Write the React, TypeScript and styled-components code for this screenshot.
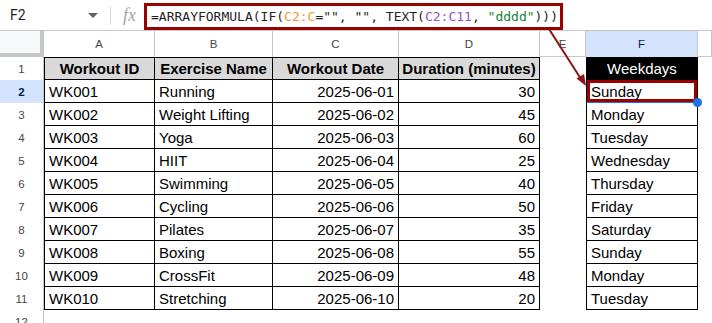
import React, { FC } from 'react';
import styled, { createGlobalStyle } from 'styled-components';

const GlobalStyle = createGlobalStyle`
  html, body {
    margin: 0;
    padding: 0;
    background: #fff;
  }
  body {
    font-family: 'Liberation Sans', Arial, sans-serif;
    overflow: hidden;
  }
`;

const Page = styled.div`
  position: relative;
  width: 712px;
  height: 323px;
  overflow: hidden;
  display: flex;
  flex-direction: column;
`;

const FormulaBar = styled.div`
  display: flex;
  align-items: center;
  height: 30px;
  flex-shrink: 0;
`;
const NameBox = styled.div`
  width: 110px;
  box-sizing: border-box;
  display: flex;
  align-items: center;
  justify-content: space-between;
  padding: 0 12px 0 10px;
  font-family: Roboto, 'Liberation Sans', sans-serif;
  font-size: 14px;
  color: #1f1f1f;
`;
const Caret = styled.span`
  width: 0;
  height: 0;
  border-left: 5px solid transparent;
  border-right: 5px solid transparent;
  border-top: 5px solid #5f6368;
`;
const Divider = styled.div`
  width: 1px;
  height: 19px;
  background: #dadce0;
`;
const Fx = styled.div`
  width: 33px;
  box-sizing: border-box;
  padding-left: 12px;
  font-family: 'Liberation Serif', serif;
  font-style: italic;
  font-size: 18px;
  color: #a4a4a4;
`;
const FormulaBox = styled.div`
  align-self: flex-end;
  width: 419px;
  height: 27px;
  box-sizing: border-box;
  border: 3px solid #990000;
  display: flex;
  align-items: center;
  padding-left: 4px;
  font-family: 'DejaVu Sans Mono', 'Liberation Mono', monospace;
  font-size: 13px;
  color: #1f1f1f;
  white-space: pre;
`;
const Token = styled.span<{ $color: string }>`
  color: ${(p) => p.$color};
`;

const Grid = styled.div`
  display: grid;
  grid-template-columns: 44px 111px 118px 126px 141px 46px 112px 1fr;
  grid-template-rows: 26px repeat(12, 23px);
  border-top: 1px solid #c7c7c7;
`;
const Corner = styled.div`
  background: #f8f9fa;
  border-right: 4px solid #c4c7c5;
  border-bottom: 4px solid #c4c7c5;
  box-sizing: border-box;
`;
const ColHead = styled.div<{ $selected?: boolean; $underline?: boolean }>`
  display: flex;
  align-items: center;
  justify-content: center;
  box-sizing: border-box;
  border-right: 1px solid #c7c7c7;
  border-bottom: ${(p) => (p.$underline ? '1px solid #c7c7c7' : 'none')};
  background: ${(p) => (p.$selected ? '#d3e3fd' : '#fff')};
  color: ${(p) => (p.$selected ? '#041e49' : '#444746')};
  font-size: 11.5px;
`;
const RowHead = styled.div<{ $selected?: boolean }>`
  display: flex;
  align-items: center;
  justify-content: center;
  box-sizing: border-box;
  border-right: 1px solid #c7c7c7;
  background: ${(p) => (p.$selected ? '#d3e3fd' : '#fff')};
  color: ${(p) => (p.$selected ? '#041e49' : '#444746')};
  font-weight: ${(p) => (p.$selected ? 700 : 400)};
  font-size: 11.5px;
`;
const Cell = styled.div<{
  $align?: 'left' | 'center' | 'right';
  $head?: boolean;
  $dark?: boolean;
  $top?: boolean;
  $left?: boolean;
  $active?: boolean;
}>`
  position: relative;
  display: flex;
  align-items: center;
  justify-content: ${(p) =>
    p.$align === 'right' ? 'flex-end' : p.$align === 'center' ? 'center' : 'flex-start'};
  box-sizing: border-box;
  padding: 0 4px;
  border-right: 1px solid #000;
  border-bottom: 1px solid ${(p) => (p.$active ? '#1a73e8' : '#000')};
  border-top: ${(p) => (p.$top ? '1px solid #000' : 'none')};
  border-left: ${(p) => (p.$left ? '1px solid #000' : 'none')};
  background: ${(p) => (p.$dark ? '#000' : p.$head ? '#d9d9d9' : '#fff')};
  color: ${(p) => (p.$dark ? '#fff' : '#000')};
  font-size: 15px;
  font-weight: ${(p) => (p.$head ? 700 : 400)};
  white-space: nowrap;
  box-shadow: ${(p) => (p.$active ? 'inset 0 0 0 3px #990000, 0 1px 0 #1a73e8' : 'none')};

  &::after {
    content: '';
    display: ${(p) => (p.$active ? 'block' : 'none')};
    position: absolute;
    right: -5px;
    bottom: -5px;
    width: 9px;
    height: 9px;
    border-radius: 50%;
    background: #1a73e8;
    z-index: 2;
  }
`;
const Blank = styled.div``;

const Arrow = styled.svg`
  position: absolute;
  left: 0;
  top: 0;
  pointer-events: none;
  z-index: 3;
`;

const rows: [string, string, string, number, string][] = [
  ['WK001', 'Running', '2025-06-01', 30, 'Sunday'],
  ['WK002', 'Weight Lifting', '2025-06-02', 45, 'Monday'],
  ['WK003', 'Yoga', '2025-06-03', 60, 'Tuesday'],
  ['WK004', 'HIIT', '2025-06-04', 25, 'Wednesday'],
  ['WK005', 'Swimming', '2025-06-05', 40, 'Thursday'],
  ['WK006', 'Cycling', '2025-06-06', 50, 'Friday'],
  ['WK007', 'Pilates', '2025-06-07', 35, 'Saturday'],
  ['WK008', 'Boxing', '2025-06-08', 55, 'Sunday'],
  ['WK009', 'CrossFit', '2025-06-09', 48, 'Monday'],
  ['WK010', 'Stretching', '2025-06-10', 20, 'Tuesday'],
];

const headers = ['Workout ID', 'Exercise Name', 'Workout Date', 'Duration (minutes)'];
const letters = ['A', 'B', 'C', 'D', 'E', 'F', ''];

const App: FC = () => {
  return (
    <>
      <GlobalStyle />
      <Page>
        <FormulaBar>
          <NameBox>
            F2
            <Caret />
          </NameBox>
          <Divider />
          <Fx>fx</Fx>
          <FormulaBox>
            =ARRAYFORMULA(IF(<Token $color="#ec9a2c">C2:C</Token>="", "", TEXT(
            <Token $color="#9552c2">C2:C11</Token>, <Token $color="#188038">"dddd"</Token>)))
          </FormulaBox>
        </FormulaBar>

        <Grid>
          <Corner />
          {letters.map((l, i) => (
            <ColHead key={i} $selected={l === 'F'} $underline={l === 'E' || l === ''}>
              {l}
            </ColHead>
          ))}

          <RowHead>1</RowHead>
          {headers.map((h, i) => (
            <Cell key={h} $head $align="center" $top $left={i === 0}>
              {h}
            </Cell>
          ))}
          <Blank />
          <Cell $dark $align="center" $top $left>
            Weekdays
          </Cell>
          <Blank />

          {rows.map((r, i) => (
            <React.Fragment key={r[0]}>
              <RowHead $selected={i === 0}>{i + 2}</RowHead>
              <Cell $left>{r[0]}</Cell>
              <Cell>{r[1]}</Cell>
              <Cell $align="right">{r[2]}</Cell>
              <Cell $align="right">{r[3]}</Cell>
              <Blank />
              <Cell $left $active={i === 0}>
                {r[4]}
              </Cell>
              <Blank />
            </React.Fragment>
          ))}

          <RowHead>12</RowHead>
        </Grid>

        <Arrow width="712" height="323" viewBox="0 0 712 323">
          <line x1="549" y1="29" x2="581" y2="79" stroke="#8b1414" strokeWidth="2" />
          <polygon points="586,86 576.5,78.5 584,74" fill="#8b1414" />
        </Arrow>
      </Page>
    </>
  );
};

export default App;
